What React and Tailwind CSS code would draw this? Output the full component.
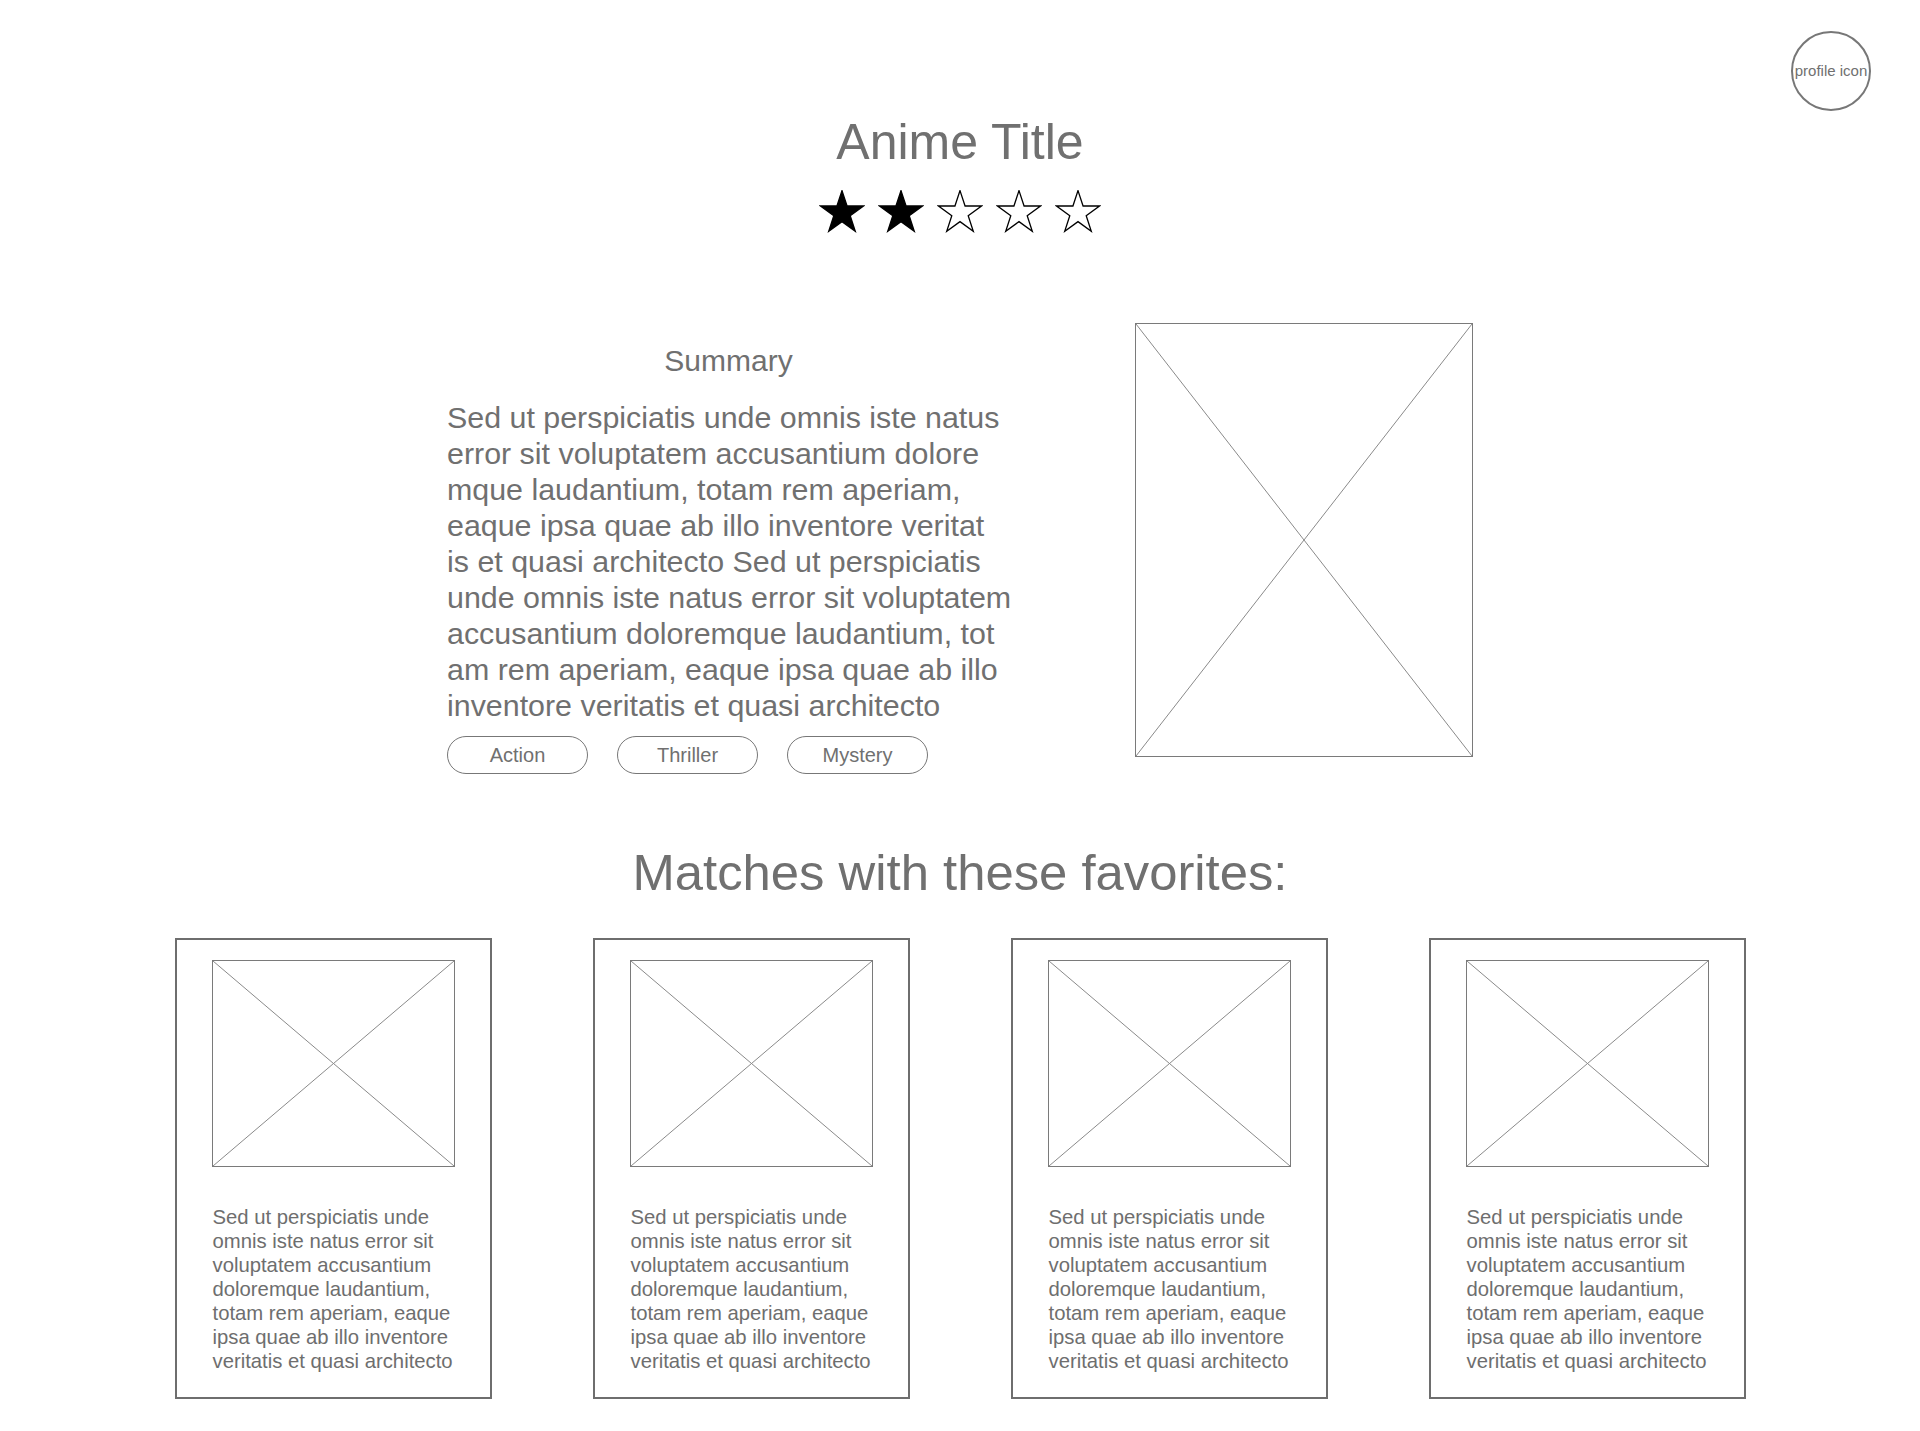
import React from "react";

const summaryLines = [
  "Sed ut perspiciatis unde omnis iste natus",
  "error sit voluptatem accusantium dolore",
  "mque laudantium, totam rem aperiam,",
  "eaque ipsa quae ab illo inventore veritat",
  "is et quasi architecto Sed ut perspiciatis",
  "unde omnis iste natus error sit voluptatem",
  "accusantium doloremque laudantium, tot",
  "am rem aperiam, eaque ipsa quae ab illo",
  "inventore veritatis et quasi architecto",
];

const cardLines = [
  "Sed ut perspiciatis unde",
  "omnis iste natus error sit",
  "voluptatem accusantium",
  "doloremque laudantium,",
  "totam rem aperiam, eaque",
  "ipsa quae ab illo inventore",
  "veritatis et quasi architecto",
];

const genres = ["Action", "Thriller", "Mystery"];

function Star({ filled }) {
  return (
    <svg width="46" height="44" viewBox="0 0 46 44">
      <polygon
        points="23,0.6 28.07,16.02 44.49,16.02 31.21,25.67 36.28,41.28 23,31.63 9.72,41.28 14.79,25.67 1.51,16.02 17.93,16.02"
        fill={filled ? "#000" : "#fff"}
        stroke="#000"
        strokeWidth="1.3"
        strokeLinejoin="miter"
      />
    </svg>
  );
}

// wireframe image placeholder: box with a cross
function ImageBox({ className }) {
  return (
    <div className={`relative border border-[#7a7a7a] bg-white ${className}`}>
      <svg
        className="absolute inset-0 h-full w-full"
        viewBox="0 0 100 100"
        preserveAspectRatio="none"
      >
        <line x1="0" y1="0" x2="100" y2="100" stroke="#8a8a8a" strokeWidth="1" vectorEffect="non-scaling-stroke" />
        <line x1="100" y1="0" x2="0" y2="100" stroke="#8a8a8a" strokeWidth="1" vectorEffect="non-scaling-stroke" />
      </svg>
    </div>
  );
}

function MatchCard() {
  return (
    <div className="h-[461px] w-[317px] border-2 border-[#6e6e6e] px-[35px] pt-[20px]">
      <ImageBox className="h-[207px] w-full" />
      <p className="mt-[38px] pl-px text-[20.3px] leading-[24px] text-[#6e6e6e] whitespace-nowrap">
        {cardLines.map((line) => (
          <span key={line} className="block">
            {line}
          </span>
        ))}
      </p>
    </div>
  );
}

export default function App() {
  return (
    <div className="relative min-h-[1431px] bg-white font-['Liberation_Sans',Arial,sans-serif] text-[#707070]">
      {/* profile */}
      <div className="absolute right-[49px] top-[31px] flex h-20 w-20 items-center justify-center rounded-full border-2 border-[#777] text-[15px] whitespace-nowrap">
        profile icon
      </div>

      {/* title + rating */}
      <header className="flex flex-col items-center pt-[112px]">
        <h1 className="text-[50px] leading-[60px]">Anime Title</h1>
        <div className="mt-[18px] flex gap-[13px]">
          {[true, true, false, false, false].map((f, i) => (
            <Star key={i} filled={f} />
          ))}
        </div>
      </header>

      {/* summary */}
      <section className="mt-[89px] flex justify-center gap-[125px]">
        <div className="w-[563px] pt-5">
          <h2 className="text-center text-[30px] leading-9">Summary</h2>
          <p className="mt-5 text-[30.4px] leading-9 whitespace-nowrap">
            {summaryLines.map((line) => (
              <span key={line} className="block">
                {line}
              </span>
            ))}
          </p>
          <div className="mt-[13px] flex gap-[29px]">
            {genres.map((g) => (
              <span
                key={g}
                className="flex h-[38px] w-[141px] items-center justify-center rounded-full border border-[#777] text-[20px]"
              >
                {g}
              </span>
            ))}
          </div>
        </div>
        <ImageBox className="h-[434px] w-[338px]" />
      </section>

      {/* matches */}
      <h2 className="mt-[69px] text-center text-[50.8px] leading-[60px]">
        Matches with these favorites:
      </h2>
      <div className="mt-[35px] flex justify-center gap-[101px] pb-[32px]">
        {[0, 1, 2, 3].map((i) => (
          <MatchCard key={i} />
        ))}
      </div>
    </div>
  );
}
